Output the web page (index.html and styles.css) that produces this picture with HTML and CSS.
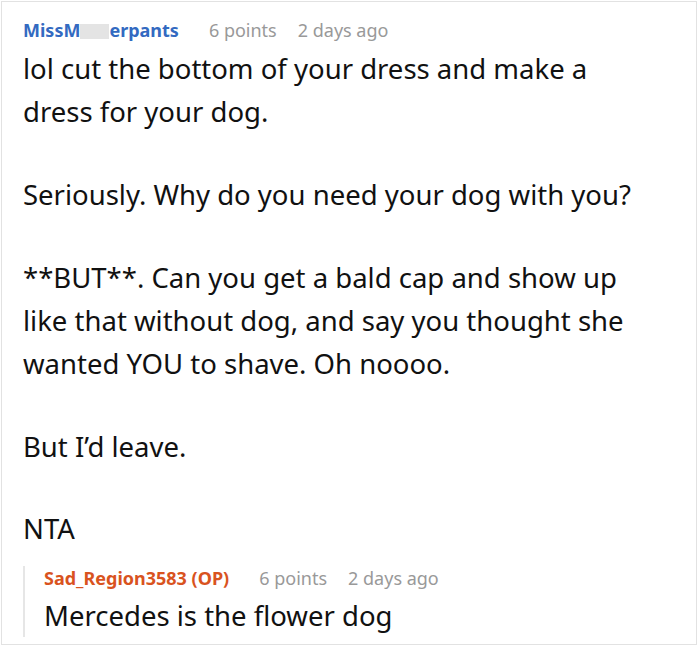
FILE: index.html
```html
<!DOCTYPE html>
<html>
<head>
<meta charset="utf-8">
<link rel="stylesheet" href="styles.css">
</head>
<body>
<div class="frame">
  <div class="comment">
    <div class="meta">
      <span class="author">MissM<span class="redact"></span>erpants</span>
      <span class="points">6 points</span>
      <span class="time">2 days ago</span>
    </div>
    <div class="body">
      <p>lol cut the bottom of your dress and make a dress for your dog.</p>
      <p>Seriously. Why do you need your dog with you?</p>
      <p>**BUT**. Can you get a bald cap and show up like that without dog, and say you thought she wanted YOU to shave. Oh noooo.</p>
      <p>But I’d leave.</p>
      <p>NTA</p>
    </div>
    <div class="reply">
      <div class="meta">
        <span class="author op">Sad_Region3583 (OP)</span>
        <span class="points">6 points</span>
        <span class="time">2 days ago</span>
      </div>
      <div class="body">
        <p>Mercedes is the flower dog</p>
      </div>
    </div>
  </div>
</div>
</body>
</html>
```

FILE: styles.css
```css
html, body {
  margin: 0;
  padding: 0;
  background: #fff;
}
body {
  font-family: "Noto Sans", "Open Sans", sans-serif;
  color: #111;
}
.frame {
  margin: 1px;
  width: 694px;
  height: 642px;
  border: 1px solid #e2e2e2;
  overflow: hidden;
}
.comment {
  padding: 16px 0 0 21px;
}
.meta {
  display: flex;
  align-items: baseline;
  font-size: 18px;
  line-height: 24px;
}
.author {
  font-weight: 700;
  color: #336ac1;
  margin-right: 30px;
}
.author.op {
  color: #d9531e;
}
.redact {
  display: inline-block;
  width: 29px;
  height: 15px;
  background: #e4e4e4;
  vertical-align: -2px;
}
.points {
  color: #999;
  margin-right: 21px;
}
.time {
  color: #999;
}
.body {
  font-size: 27.5px;
  line-height: 43.2px;
  width: 630px;
  margin-top: 5px;
}
.body p {
  margin: 0 0 39.5px 0;
}
.body p:last-child {
  margin-bottom: 0;
}
.reply {
  margin-top: 15px;
  border-left: 2px solid #e6e6e6;
  padding-left: 19px;
}
.reply .body {
  width: auto;
  margin-top: 4px;
}
```
